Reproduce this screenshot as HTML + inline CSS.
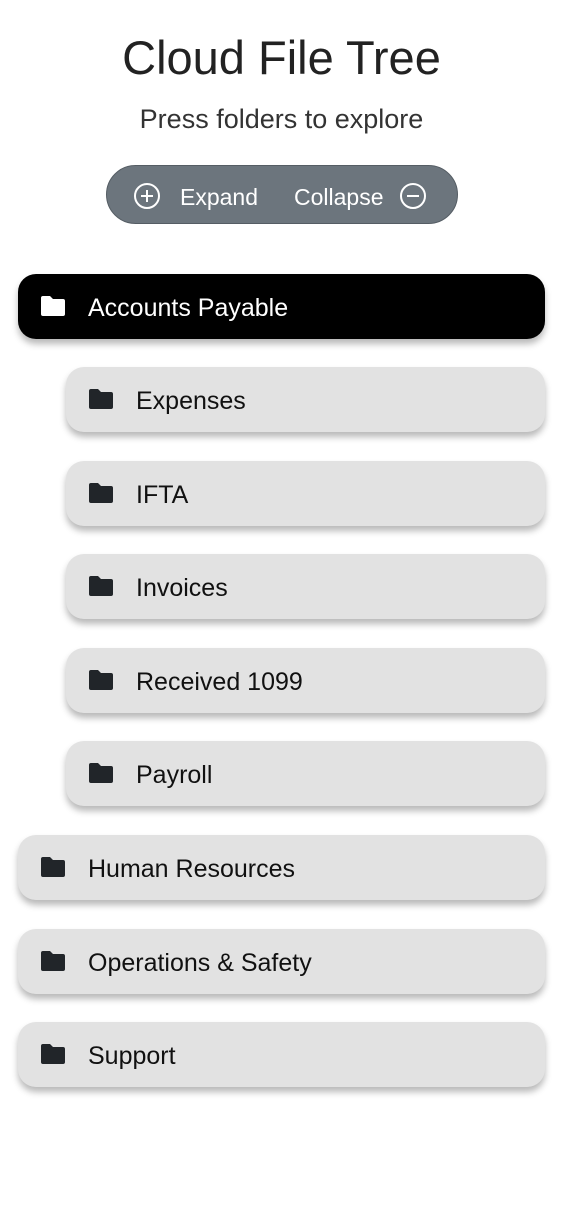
<!DOCTYPE html>
<html><head><meta charset="utf-8"><style>
body{margin:0;width:563px;height:1218px;background:#fff;font-family:"Liberation Sans",sans-serif;position:relative;overflow:hidden}
.t{position:absolute;left:0;width:563px;text-align:center;color:#111}
.btn{position:absolute;left:106px;top:165px;width:352px;height:59px;background:#6c757d;border-radius:30px;border:1px solid #555d64;box-sizing:border-box;color:#fff;font-size:23px}
.btn span{position:absolute;top:18px}
.it{position:absolute;height:65px;right:18px;border-radius:18px;background:#e2e2e2;box-shadow:0 5px 7px rgba(0,0,0,.28);color:#111;font-size:25px}
.it svg{position:absolute;left:21px;top:20px}
.it span{position:absolute;left:70px;top:20px}
.a{background:#000;color:#fff}
</style></head><body>
<div class="t" style="top:30px;font-size:47px;color:#222">Cloud File Tree</div>
<div class="t" style="top:104px;font-size:27px;color:#333">Press folders to explore</div>
<div class="btn">
<svg style="position:absolute;left:26px;top:16px" width="28" height="28" viewBox="0 0 28 28"><circle cx="14" cy="14" r="12" fill="none" stroke="#fff" stroke-width="2"/><path d="M14 8v12M8 14h12" stroke="#fff" stroke-width="2"/></svg>
<span style="left:73px">Expand</span><span style="left:187px">Collapse</span>
<svg style="position:absolute;left:292px;top:16px" width="28" height="28" viewBox="0 0 28 28"><circle cx="14" cy="14" r="12" fill="none" stroke="#fff" stroke-width="2"/><path d="M8 14h12" stroke="#fff" stroke-width="2"/></svg>
</div>
<div class="it a" style="left:18px;top:274px"><svg width="28" height="24" viewBox="0 0 28 24"><path d="M2 4q0-2 2-2h7l3 3h10q2 0 2 2v13q0 2-2 2H4q-2 0-2-2z" fill="#fff"/></svg><span>Accounts Payable</span></div>
<div class="it" style="left:66px;top:367px"><svg width="28" height="24" viewBox="0 0 28 24"><path d="M2 4q0-2 2-2h7l3 3h10q2 0 2 2v13q0 2-2 2H4q-2 0-2-2z" fill="#212529"/></svg><span>Expenses</span></div>
<div class="it" style="left:66px;top:461px"><svg width="28" height="24" viewBox="0 0 28 24"><path d="M2 4q0-2 2-2h7l3 3h10q2 0 2 2v13q0 2-2 2H4q-2 0-2-2z" fill="#212529"/></svg><span>IFTA</span></div>
<div class="it" style="left:66px;top:554px"><svg width="28" height="24" viewBox="0 0 28 24"><path d="M2 4q0-2 2-2h7l3 3h10q2 0 2 2v13q0 2-2 2H4q-2 0-2-2z" fill="#212529"/></svg><span>Invoices</span></div>
<div class="it" style="left:66px;top:648px"><svg width="28" height="24" viewBox="0 0 28 24"><path d="M2 4q0-2 2-2h7l3 3h10q2 0 2 2v13q0 2-2 2H4q-2 0-2-2z" fill="#212529"/></svg><span>Received 1099</span></div>
<div class="it" style="left:66px;top:741px"><svg width="28" height="24" viewBox="0 0 28 24"><path d="M2 4q0-2 2-2h7l3 3h10q2 0 2 2v13q0 2-2 2H4q-2 0-2-2z" fill="#212529"/></svg><span>Payroll</span></div>
<div class="it" style="left:18px;top:835px"><svg width="28" height="24" viewBox="0 0 28 24"><path d="M2 4q0-2 2-2h7l3 3h10q2 0 2 2v13q0 2-2 2H4q-2 0-2-2z" fill="#212529"/></svg><span>Human Resources</span></div>
<div class="it" style="left:18px;top:929px"><svg width="28" height="24" viewBox="0 0 28 24"><path d="M2 4q0-2 2-2h7l3 3h10q2 0 2 2v13q0 2-2 2H4q-2 0-2-2z" fill="#212529"/></svg><span>Operations &amp; Safety</span></div>
<div class="it" style="left:18px;top:1022px"><svg width="28" height="24" viewBox="0 0 28 24"><path d="M2 4q0-2 2-2h7l3 3h10q2 0 2 2v13q0 2-2 2H4q-2 0-2-2z" fill="#212529"/></svg><span>Support</span></div>
</body></html>
